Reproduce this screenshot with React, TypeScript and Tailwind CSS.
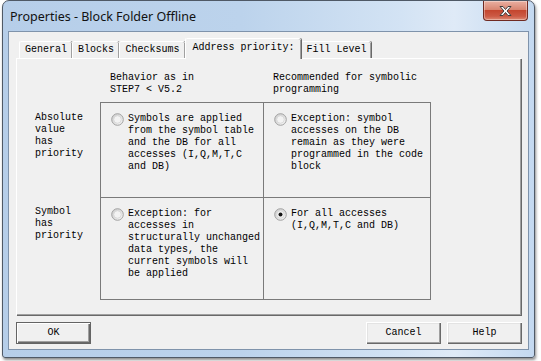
import { FC, ReactNode, useId } from "react";

const mono = "font-['Liberation_Mono',monospace] text-[10px] leading-[12px] text-black";

const Radio: FC<{ checked?: boolean }> = ({ checked }) => {
  const id = useId();
  return (
    <svg width="13" height="13" viewBox="0 0 13 13" className="shrink-0">
      <defs>
        <radialGradient id={id} cx="65%" cy="65%" r="70%">
          <stop offset="0" stopColor="#ffffff" />
          <stop offset="1" stopColor="#cfcfcf" />
        </radialGradient>
      </defs>
      <circle cx="6.5" cy="6.5" r="5.8" fill={`url(#${id})`} stroke="#a2a2a2" strokeWidth="1" />
      <circle cx="6.5" cy="6.5" r="3.8" fill="#f3f3f3" stroke="#d2d2d2" strokeWidth="0.8" />
      {checked && <circle cx="6.5" cy="6.5" r="2" fill="#151515" />}
    </svg>
  );
};

const Cell: FC<{ checked?: boolean; lines: string[]; className: string }> = ({
  checked,
  lines,
  className,
}) => (
  <div className={`border-r border-b border-[#7a7a7a] pl-[10px] pt-[10px] ${className}`}>
    <div className="flex items-start gap-[4px]">
      <Radio checked={checked} />
      <div className={mono}>
        {lines.map((l) => (
          <div key={l} className="whitespace-pre">
            {l}
          </div>
        ))}
      </div>
    </div>
  </div>
);

const Tab: FC<{ w: string; active?: boolean; children: ReactNode }> = ({ w, active, children }) =>
  active ? (
    <div
      className={`${w} h-[21px] -mb-px z-10 flex items-center justify-center pb-[2px] bg-[#f0f0f0] border-l border-t border-white rounded-t-[2px] shadow-[1px_0_0_#696969,inset_-1px_0_0_#a0a0a0] ${mono}`}
    >
      {children}
    </div>
  ) : (
    <div
      className={`${w} h-[17px] flex items-center justify-center bg-[#f0f0f0] border-l border-t border-white rounded-t-[2px] shadow-[1px_0_0_#696969,inset_-1px_0_0_#a0a0a0] ${mono}`}
    >
      {children}
    </div>
  );

const Button: FC<{ isDefault?: boolean; children: ReactNode }> = ({ isDefault, children }) =>
  isDefault ? (
    <div
      className={`w-[75px] h-[22px] flex items-center justify-center bg-[#f0f0f0] border border-[#646464] shadow-[inset_1px_1px_0_#fff,inset_-1px_-1px_0_#696969,inset_-2px_-2px_0_#a0a0a0] ${mono}`}
    >
      {children}
    </div>
  ) : (
    <div
      className={`w-[75px] h-[22px] flex items-center justify-center bg-[#f0f0f0] shadow-[inset_1px_1px_0_#fff,inset_-1px_-1px_0_#696969,inset_-2px_-2px_0_#a0a0a0,inset_2px_2px_0_#e3e3e3] ${mono}`}
    >
      {children}
    </div>
  );

export default function App() {
  return (
    <div className="w-[541px] h-[361px] bg-white overflow-hidden">
      <div className="ml-[2px] w-[533px] h-[358px] flex flex-col border border-[#4f5966] rounded-t-[7px] rounded-b-[3px] shadow-[1px_2px_3px_rgba(0,0,0,0.45)] bg-[linear-gradient(90deg,#b6cee9_0%,#bcd3ec_45%,#d3e3f4_75%,#dfeaf7_85%,#c4d9f0_100%)]">
        {/* title bar */}
        <div className="h-[30px] flex items-start justify-between pl-[7px] pr-[6px]">
          <span className="pt-[7px] font-['Noto_Sans',sans-serif] text-[12.5px] leading-[18px] text-[#111]">
            Properties - Block Folder Offline
          </span>
          <div className="w-[45px] h-[20px] flex items-center justify-center rounded-b-[4px] border border-t-0 border-[#6f2a22] bg-[linear-gradient(180deg,#eab0a2_0%,#d98672_45%,#c4462f_50%,#cc5a45_80%,#de8a74_100%)] shadow-[inset_0_0_0_1px_rgba(255,255,255,0.35)]">
            <svg width="15" height="12" viewBox="0 0 15 12">
              <path
                d="M2 1.5h3l2.5 3 2.5-3h3l-4 4.5 4 4.5h-3l-2.5-3-2.5 3h-3l4-4.5z"
                fill="#fff"
                stroke="#3e3e3e"
                strokeWidth="1"
                strokeLinejoin="round"
              />
            </svg>
          </div>
        </div>

        {/* client area */}
        <div className="ml-[5px] w-[521px] h-[319px] border border-[#7f93ab] bg-[#f0f0f0] px-[7px] pt-[6px] flex flex-col">
          <div className="h-[20px] pl-[3px] flex items-end">
            <Tab w="w-[53px]">General</Tab>
            <Tab w="w-[47px]">Blocks</Tab>
            <Tab w="w-[66px]">Checksums</Tab>
            <Tab w="w-[116px]" active>
              Address priority:
            </Tab>
            <Tab w="w-[70px]">Fill Level</Tab>
          </div>

          {/* tab panel */}
          <div className="w-[505px] h-[257px] border-l border-t border-white shadow-[1px_1px_0_#696969,inset_-1px_-1px_0_#a0a0a0]">
            <div className="pt-[13px] flex">
              <div className="w-[83px]" />
              <div className={`w-[163px] pl-[10px] ${mono}`}>
                <div className="whitespace-pre">Behavior as in</div>
                <div className="whitespace-pre">STEP7 &lt; V5.2</div>
              </div>
              <div className={`pl-[10px] ${mono}`}>
                <div className="whitespace-pre">Recommended for symbolic</div>
                <div>programming</div>
              </div>
            </div>

            <div className="mt-[6px] flex">
              <div className="w-[83px] flex flex-col">
                <div className={`h-[95px] pl-[18px] pt-[10px] ${mono}`}>
                  <div>Absolute</div>
                  <div>value</div>
                  <div>has</div>
                  <div>priority</div>
                </div>
                <div className={`pl-[18px] pt-[9px] ${mono}`}>
                  <div>Symbol</div>
                  <div>has</div>
                  <div>priority</div>
                </div>
              </div>
              <div className="grid grid-cols-[163px_167px] border-l border-t border-[#7a7a7a]">
                <Cell
                  className="h-[95px]"
                  lines={[
                    "Symbols are applied",
                    "from the symbol table",
                    "and the DB for all",
                    "accesses (I,Q,M,T,C",
                    "and DB)",
                  ]}
                />
                <Cell
                  className="h-[95px]"
                  lines={[
                    "Exception: symbol",
                    "accesses on the DB",
                    "remain as they were",
                    "programmed in the code",
                    "block",
                  ]}
                />
                <Cell
                  className="h-[102px]"
                  lines={[
                    "Exception: for",
                    "accesses in",
                    "structurally unchanged",
                    "data types, the",
                    "current symbols will",
                    "be applied",
                  ]}
                />
                <Cell
                  className="h-[102px]"
                  checked
                  lines={["For all accesses", "(I,Q,M,T,C and DB)"]}
                />
              </div>
            </div>
          </div>

          <div className="mt-[7px] flex justify-between">
            <Button isDefault>OK</Button>
            <div className="flex gap-[6px] mr-[-1px]">
              <Button>Cancel</Button>
              <Button>Help</Button>
            </div>
          </div>
        </div>
      </div>
    </div>
  );
}
